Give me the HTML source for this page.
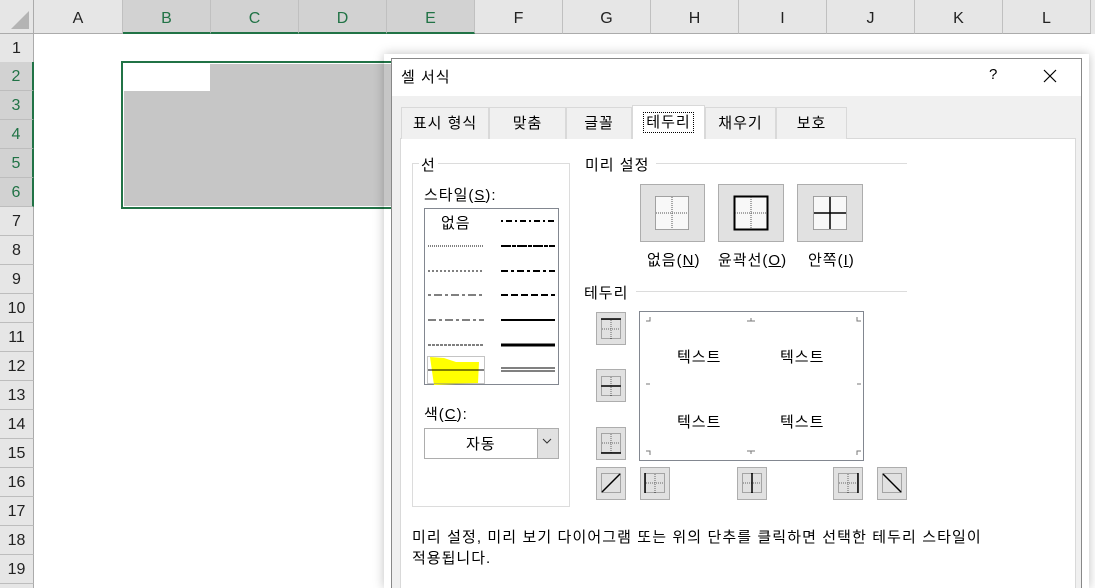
<!DOCTYPE html>
<html><head><meta charset="utf-8"><style>
*{box-sizing:border-box;margin:0;padding:0}
html{width:1095px;height:588px;overflow:hidden}
body{width:1095px;height:588px;overflow:hidden;background:#fff;position:relative;font-family:"Liberation Sans","Noto Sans CJK KR",sans-serif;color:#000}
.a{position:absolute}
.ch{position:absolute;top:0;height:34px;background:#e6e6e6;border-bottom:1px solid #ababab;border-right:1px solid #c0c0c0;text-align:center;line-height:38px;font-size:16px;color:#222}
.ch.s{background:#d2d2d2;color:#217346;border-bottom:2px solid #217346}
.rh{position:absolute;left:0;width:34px;height:29px;background:#e6e6e6;border-bottom:1px solid #bdbdbd;border-right:1px solid #ababab;text-align:center;line-height:29px;font-size:16px;color:#222}
.rh.s{background:#d2d2d2;color:#217346;border-right:2px solid #217346}
.t{position:absolute;font-size:15px;letter-spacing:1px;white-space:nowrap}
.btn{position:absolute;background:#e1e1e1;border:1px solid #adadad}
.tab{position:absolute;top:107px;height:32px;border:1px solid #d9d9d9;border-bottom:none;background:#f0f0f0;font-size:15px;letter-spacing:1px;text-align:center;line-height:32px}
</style></head><body>
<div class="a" style="left:0;top:0;width:1095px;height:34px;background:#e6e6e6"></div>
<div class="a" style="left:0;top:0;width:34px;height:34px;background:#e6e6e6;border-right:1px solid #ababab;border-bottom:1px solid #ababab"></div>
<svg class="a" style="left:10px;top:10px" width="20" height="20"><polygon points="19,1 19,19 1,19" fill="#b4b4b4"/></svg>
<div class="ch" style="left:34px;width:89px">A</div>
<div class="ch s" style="left:123px;width:88px">B</div>
<div class="ch s" style="left:211px;width:88px">C</div>
<div class="ch s" style="left:299px;width:88px">D</div>
<div class="ch s" style="left:387px;width:88px">E</div>
<div class="ch" style="left:475px;width:88px">F</div>
<div class="ch" style="left:563px;width:88px">G</div>
<div class="ch" style="left:651px;width:88px">H</div>
<div class="ch" style="left:739px;width:88px">I</div>
<div class="ch" style="left:827px;width:88px">J</div>
<div class="ch" style="left:915px;width:88px">K</div>
<div class="ch" style="left:1003px;width:88px">L</div>
<div class="rh" style="top:34px">1</div>
<div class="rh s" style="top:62px">2</div>
<div class="rh s" style="top:91px">3</div>
<div class="rh s" style="top:120px">4</div>
<div class="rh s" style="top:149px">5</div>
<div class="rh s" style="top:178px">6</div>
<div class="rh" style="top:207px">7</div>
<div class="rh" style="top:236px">8</div>
<div class="rh" style="top:265px">9</div>
<div class="rh" style="top:294px">10</div>
<div class="rh" style="top:323px">11</div>
<div class="rh" style="top:352px">12</div>
<div class="rh" style="top:381px">13</div>
<div class="rh" style="top:410px">14</div>
<div class="rh" style="top:439px">15</div>
<div class="rh" style="top:468px">16</div>
<div class="rh" style="top:497px">17</div>
<div class="rh" style="top:526px">18</div>
<div class="rh" style="top:555px">19</div>
<div class="rh" style="top:584px">20</div>
<div class="a" style="left:121px;top:61px;width:300px;height:148px;border:2px solid #217346"></div>
<div class="a" style="left:123px;top:63px;width:298px;height:144px;border:1px solid #fff;background:#c6c6c6"></div>
<div class="a" style="left:124px;top:64px;width:86px;height:27px;background:#fff"></div>
<div class="a" style="left:384px;top:54px;width:705px;height:534px;box-shadow:0 0 10px rgba(0,0,0,.25)"></div>
<div class="a" style="left:391px;top:58px;width:691px;height:530px;background:#f0f0f0;border:1px solid #888;border-bottom:none"></div>
<div class="a" style="left:392px;top:59px;width:689px;height:37px;background:#fff"></div>
<div class="t" style="left:401px;top:66px">셀 서식</div>
<div class="t" style="left:989px;top:66px">?</div>
<svg class="a" style="left:1043px;top:69px" width="14" height="14"><path d="M1 1L13 13M13 1L1 13" stroke="#000" stroke-width="1.2"/></svg>
<div class="a" style="left:400px;top:138px;width:676px;height:450px;background:#fff;border:1px solid #d9d9d9;border-bottom:none"></div>
<div class="tab" style="left:401px;width:88px">표시 형식</div>
<div class="tab" style="left:489px;width:77px">맞춤</div>
<div class="tab" style="left:566px;width:66px">글꼴</div>
<div class="tab" style="left:632px;top:105px;height:34px;width:73px;background:#fff;line-height:34px"><span style="border:1px dotted #000;padding:1px 2px">테두리</span></div>
<div class="tab" style="left:705px;width:71px">채우기</div>
<div class="tab" style="left:776px;width:71px">보호</div>
<div class="a" style="left:412px;top:163px;width:158px;height:344px;border:1px solid #dcdcdc"></div>
<div class="t" style="left:419px;top:154px;background:#fff;padding:0 2px">선</div>
<div class="t" style="left:424px;top:184px">스타일(<u>S</u>):</div>
<div class="a" style="left:424px;top:208px;width:135px;height:177px;border:1px solid #828790;background:#fff"></div>
<div class="t" style="left:441px;top:212px">없음</div>
<svg class="a" style="left:424px;top:208px" width="135" height="177">
<g stroke="#000">
<line x1="4" x2="60" y1="38" y2="38" stroke-dasharray="1,1"/>
<line x1="4" x2="60" y1="63" y2="63" stroke-dasharray="2,2"/>
<line x1="4" x2="60" y1="87" y2="87" stroke-dasharray="3,3,8,3"/>
<line x1="4" x2="60" y1="112" y2="112" stroke-dasharray="8,3,3,3"/>
<line x1="4" x2="60" y1="137" y2="137" stroke-dasharray="3,1"/>
<line x1="77" x2="131" y1="13" y2="13" stroke-width="2" stroke-dasharray="2,3,6,3"/>
<line x1="77" x2="131" y1="38" y2="38" stroke-width="2" stroke-dasharray="10,1,4,1"/>
<line x1="77" x2="131" y1="63" y2="63" stroke-width="2" stroke-dasharray="7,3,3,3"/>
<line x1="77" x2="131" y1="87" y2="87" stroke-width="2" stroke-dasharray="7,3"/>
<line x1="77" x2="131" y1="112" y2="112" stroke-width="2"/>
<line x1="77" x2="131" y1="137" y2="137" stroke-width="3"/>
<line x1="77" x2="131" y1="160" y2="160"/><line x1="77" x2="131" y1="163" y2="163"/>
</g>
<path d="M6 149 L20 150 L32 154 L55 154 L54 175 L10 177 Z" fill="#ffff00"/>
<rect x="3.5" y="148.5" width="57" height="27" fill="none" stroke="#888" stroke-dasharray="1,1"/>
<line x1="4" x2="60" y1="162" y2="162" stroke="#000"/>
</svg>
<div class="t" style="left:424px;top:403px">색(<u>C</u>):</div>
<div class="a" style="left:424px;top:428px;width:135px;height:31px;border:1px solid #adadad;background:#fff"></div>
<div class="t" style="left:466px;top:433px">자동</div>
<div class="a" style="left:537px;top:429px;width:21px;height:29px;background:#e1e1e1;border-left:1px solid #adadad"></div>
<svg class="a" style="left:542px;top:438px" width="10" height="8"><path d="M1 1L5 5L9 1" fill="none" stroke="#333"/></svg>
<div class="t" style="left:585px;top:154px">미리 설정</div>
<div class="a" style="left:656px;top:163px;width:251px;height:1px;background:#dcdcdc"></div>
<div class="btn" style="left:640px;top:184px;width:65px;height:58px"></div>
<div class="btn" style="left:718px;top:184px;width:66px;height:58px"></div>
<div class="btn" style="left:797px;top:184px;width:66px;height:58px"></div>
<svg class="a" style="left:640px;top:184px" width="225" height="58"><g fill="#f8f8f8" stroke="#555" stroke-dasharray="1,1">
<rect x="15.5" y="12.5" width="33" height="33"/><line x1="32" x2="32" y1="13" y2="45"/><line x1="16" x2="48" y1="29" y2="29"/>
<rect x="173.5" y="12.5" width="33" height="33"/></g>
<rect x="94.5" y="12.5" width="33" height="33" fill="#f8f8f8" stroke="#000" stroke-width="2"/>
<g stroke="#555" stroke-dasharray="1,1"><line x1="111" x2="111" y1="13" y2="45"/><line x1="95" x2="127" y1="29" y2="29"/></g>
<g stroke="#000" stroke-width="1.5"><line x1="190" x2="190" y1="13" y2="45"/><line x1="174" x2="206" y1="29" y2="29"/></g></svg>
<div class="t" style="left:647px;top:249px">없음(<u>N</u>)</div>
<div class="t" style="left:718px;top:249px">윤곽선(<u>O</u>)</div>
<div class="t" style="left:808px;top:249px">안쪽(<u>I</u>)</div>
<div class="t" style="left:584px;top:282px">테두리</div>
<div class="a" style="left:636px;top:291px;width:271px;height:1px;background:#dcdcdc"></div>
<div class="a" style="left:639px;top:311px;width:225px;height:150px;border:1px solid #828790;background:#fff"></div>
<svg class="a" style="left:639px;top:311px" width="225" height="150"><g stroke="#777" fill="none">
<path d="M11 6V10H7M218 6V10H222M11 144V140H7M218 144V140H222M112 7V10M108 10H116M112 143V140M108 140H116M7 73H11M222 73H218"/></g></svg>
<div class="t" style="left:677px;top:346px">텍스트</div>
<div class="t" style="left:780px;top:346px">텍스트</div>
<div class="t" style="left:677px;top:411px">텍스트</div>
<div class="t" style="left:780px;top:411px">텍스트</div>
<div class="btn" style="left:596px;top:312px;width:30px;height:33px"></div>
<div class="btn" style="left:596px;top:369px;width:30px;height:33px"></div>
<div class="btn" style="left:596px;top:427px;width:30px;height:33px"></div>
<div class="btn" style="left:596px;top:467px;width:30px;height:33px"></div>
<div class="btn" style="left:640px;top:467px;width:30px;height:33px"></div>
<div class="btn" style="left:737px;top:467px;width:30px;height:33px"></div>
<div class="btn" style="left:833px;top:467px;width:30px;height:33px"></div>
<div class="btn" style="left:877px;top:467px;width:30px;height:33px"></div>
<svg class="a" style="left:0;top:0" width="1095" height="588"><g fill="none" stroke="#666" stroke-dasharray="1,1">
<rect x="601.5" y="319.5" width="19" height="19"/><line x1="611" x2="611" y1="320" y2="339"/><line x1="602" x2="620" y1="329" y2="329"/>
<rect x="601.5" y="376.5" width="19" height="19"/><line x1="611" x2="611" y1="377" y2="396"/>
<rect x="601.5" y="433.5" width="19" height="19"/><line x1="611" x2="611" y1="434" y2="453"/><line x1="602" x2="620" y1="443" y2="443"/>
<rect x="601.5" y="473.5" width="19" height="19"/>
<rect x="645.5" y="473.5" width="19" height="19"/><line x1="655" x2="655" y1="474" y2="493"/><line x1="646" x2="664" y1="483" y2="483"/>
<rect x="742.5" y="473.5" width="19" height="19"/><line x1="743" x2="761" y1="483" y2="483"/>
<rect x="838.5" y="473.5" width="19" height="19"/><line x1="848" x2="848" y1="474" y2="493"/><line x1="839" x2="857" y1="483" y2="483"/>
<rect x="882.5" y="473.5" width="19" height="19"/></g>
<g stroke="#000" stroke-width="1.5">
<line x1="601" x2="621" y1="319" y2="319"/><line x1="601" x2="621" y1="386" y2="386"/><line x1="601" x2="621" y1="453" y2="453"/>
<line x1="602" x2="620" y1="492" y2="474"/><line x1="645" x2="645" y1="473" y2="493"/><line x1="752" x2="752" y1="473" y2="493"/>
<line x1="858" x2="858" y1="473" y2="493"/><line x1="883" x2="901" y1="474" y2="492"/></g></svg>
<div class="t" style="left:412px;top:526px;letter-spacing:1.1px">미리 설정, 미리 보기 다이어그램 또는 위의 단추를 클릭하면 선택한 테두리 스타일이</div>
<div class="t" style="left:412px;top:547px">적용됩니다.</div>
</body></html>
